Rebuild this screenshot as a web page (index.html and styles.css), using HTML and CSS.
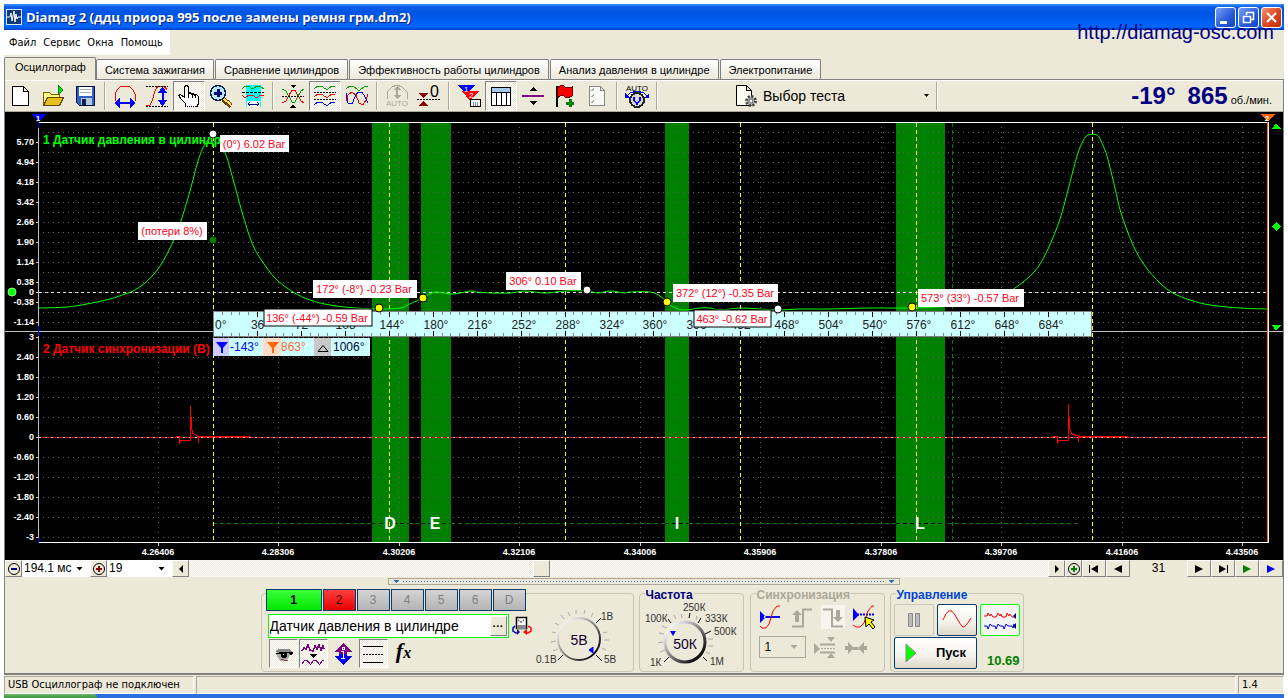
FILE: index.html
```html
<!DOCTYPE html>
<html lang="ru">
<head>
<meta charset="utf-8">
<title>Diamag 2</title>
<link rel="stylesheet" href="styles.css">
</head>
<body>
<div class="window">
  <header class="titlebar">
    <svg class="app-icon" width="16" height="16" viewBox="0 0 16 16"><rect width="16" height="16" fill="#d8e8ff"/><rect x="1" y="1" width="14" height="14" fill="#103878"/><path d="M1 8h3l1-4 1 8 2-10 1 11 1-8 1 5 1-2h3" fill="none" stroke="#fff"/></svg>
    <h1 class="title">Diamag 2 (ддц приора 995 после замены ремня грм.dm2)</h1>
    <div class="win-buttons">
      <button class="win-btn" aria-label="Свернуть"><svg width="19" height="19" viewBox="0 0 19 19"><path d="M4 13h7v3H4z" fill="#fff"/></svg></button>
      <button class="win-btn" aria-label="Развернуть"><svg width="19" height="19" viewBox="0 0 19 19"><path d="M7.500 7V4.500h7v7H12M7 4.500h8M4.500 8.500h7v6h-7zM4 8.500h8" fill="none" stroke="#fff" stroke-width="1.500"/></svg></button>
      <button class="win-btn close" aria-label="Закрыть"><svg width="19" height="19" viewBox="0 0 19 19"><path d="M5 5l9 9M14 5l-9 9" stroke="#fff" stroke-width="2.200"/></svg></button>
    </div>
  </header>
  <a class="site" href="#">http://diamag-osc.com</a>
  <nav class="menu">
    <button>Файл</button><button>Сервис</button><button>Окна</button><button>Помощь</button>
  </nav>
  <div class="tabs">
    <button class="tab active">Осциллограф</button>
    <button class="tab">Система зажигания</button>
    <button class="tab">Сравнение цилиндров</button>
    <button class="tab">Эффективность работы цилиндров</button>
    <button class="tab">Анализ давления в цилиндре</button>
    <button class="tab">Электропитание</button>
  </div>
  <main class="page">
    <div class="toolbar">
      <button class="tool" aria-label="Новый"><svg viewBox="0 0 24 24"><path d="M3.500 2.500h11l5 5v14h-16zM14.500 2.500v5h5" fill="#fff" stroke="#000"/></svg></button>
      <button class="tool" aria-label="Открыть"><svg viewBox="0 0 24 24"><path d="M2.500 21.500v-13h6l2 2h8v4" fill="#ffff80" stroke="#806000"/><path d="M2.500 21.500l4-8h16l-4 8z" fill="#e8c020" stroke="#604800"/><path d="M17 1l5 5-5 5z" fill="#00e020" stroke="#008000"/></svg></button>
      <button class="tool" aria-label="Сохранить"><svg viewBox="0 0 24 24"><path d="M3.500 2.500h18v19h-15l-3-3z" fill="#3060c0" stroke="#001040"/><path d="M6 3h13v9H6z" fill="#fff"/><path d="M8 14h11v7H8z" fill="#b8c8e0"/><path d="M9 15h4v6H9z" fill="#102050"/><path d="M7 5.500h11M7 8.500h11" stroke="#b0b0b0"/></svg></button>
      <span class="sep"></span>
      <button class="tool" aria-label="Период"><svg viewBox="0 0 24 24"><path d="M2 17V10l2-4 4-4h8l4 4 2 4v7" fill="none" stroke="#f00"/><path d="M1 19l6-5v4h10v-4l6 5-6 5v-4H7v4z" fill="#00f"/></svg></button>
      <button class="tool" aria-label="Амплитуда"><svg viewBox="0 0 24 24"><path d="M1 22l4-1 2-4 3-10 3-5h6l3 4" fill="none" stroke="#f00"/><path d="M1 2.500h22M1 22.500h22" stroke="#000" stroke-dasharray="2 1"/><path d="M17.500 3l5 6h-4v7h4l-5 6-5-6h4V9h-4z" fill="#00f"/></svg></button>
      <button class="tool pressed" aria-label="Рука"><svg viewBox="0 0 24 24"><path d="M8.500 22.500v-3l-4-4-3-4 2-1 4 3v-10l1-2 2 0 1 2v6l2-1 1 2 2-1 1 2 2-1 2 2v7l-2 4M11.500 9v5M15 10v4M18.500 11v3" fill="#fff" stroke="#000"/><path d="M8 22.500h12" stroke="#000" stroke-dasharray="1 1"/></svg></button>
      <button class="tool" aria-label="Увеличить"><svg viewBox="0 0 24 24"><path d="M14 15l8 7" stroke="#604000" stroke-width="5"/><path d="M14 14l8 7" stroke="#ffd860" stroke-width="2"/><circle cx="9" cy="9" r="7.500" fill="#b8e8ff" stroke="#102050" stroke-width="1.500"/><path d="M9 5v8M5 9h8" stroke="#000080" stroke-width="3"/></svg></button>
      <button class="tool" aria-label="Окно"><svg viewBox="0 0 24 24"><path d="M5 1h15v22H5z" fill="#0ff"/><path d="M1 5l3-3h3l5 3 4-3h3l4 3" fill="none" stroke="#00a000"/><path d="M1 11l3 3 4-3h3l5 3 3-3h4" fill="none" stroke="#f00"/><path d="M1 8.500h22" stroke="#000" stroke-dasharray="3 1"/><path d="M6 17h13v6H6z" fill="#fff"/><path d="M7 20h11M9 18l-2 2 2 2M16 18l2 2-2 2" fill="none" stroke="#0000a0"/></svg></button>
      <span class="sep"></span>
      <button class="tool" aria-label="Совмещение"><svg viewBox="0 0 24 24"><path d="M1 19l4-2 6-11h3l6 11 3 2" fill="none" stroke="#f00"/><path d="M1 5l4 2 6 11h3l6-11 3-2" fill="none" stroke="#00a000"/><path d="M1 12.500h22" stroke="#000" stroke-dasharray="2 1"/><path d="M9 1h6l-3 3zM9 24h6l-3-4z"/></svg></button>
      <button class="tool pressed" aria-label="Раздельно"><svg viewBox="0 0 24 24"><path d="M1 5l4-3h3l5 3h2l4-3h3" fill="none" stroke="#00a000"/><path d="M1 13l4-3h3l5 3h2l4-3h3" fill="none" stroke="#f00"/><path d="M1 21l4-3h3l5 3h2l4-3h3" fill="none" stroke="#00f"/><path d="M1 8.500h22M1 15.500h22" stroke="#000" stroke-dasharray="2 1"/></svg></button>
      <button class="tool" aria-label="Вместе"><svg viewBox="0 0 24 24"><path d="M1 5l4-3h3l5 4h2l5-4h3" fill="none" stroke="#00a000"/><path d="M1 17l2-6 4-3 4 3 3 8 4 2 3-5 2-6" fill="none" stroke="#f00"/><path d="M1 9l2 10 4 1 3-7 3-5h4l3 5 3 6" fill="none" stroke="#00f"/></svg></button>
      <span class="sep"></span>
      <button class="tool" aria-label="Авто" disabled><svg viewBox="0 0 24 24"><path d="M2 15V8l5-5 5-2 5 2 5 5v7" fill="none" stroke="#aca899"/><path d="M12 2l4 4h-3v5h3l-4 4-4-4h3V6H8z" fill="#aca899"/><text x="12" y="22" class="auto-label" fill="#aca899">AUTO</text></svg></button>
      <button class="tool" aria-label="Ноль"><svg viewBox="0 0 24 24"><path d="M1 9h10l-5 5zM1 22h10l-5-5z" fill="#900000"/><path d="M0 15.500h24" stroke="#000" stroke-dasharray="2 1"/><text x="13" y="13" class="zero-label">0</text></svg></button>
      <span class="sep"></span>
      <button class="tool" aria-label="Маркеры"><svg viewBox="0 0 24 24"><path d="M0 1h18l-9 9z" fill="#00f"/><path d="M5 7h17l-9 10z" fill="#f00"/><path d="M13 10v12" stroke="#f00"/><text x="7" y="8" class="flag-label">1</text><text x="12" y="14" class="flag-label">2</text><path d="M13.500 15.500h10v7h-10z" fill="#fff" stroke="#000"/><path d="M16.500 18v4M18.500 18v4M20.500 18v4" stroke="#888"/></svg></button>
      <button class="tool pressed" aria-label="Таблица"><svg viewBox="0 0 24 24"><path d="M2.500 3.500h19v18h-19z" fill="#fff" stroke="#000"/><path d="M3 4h18v4H3z" fill="#a8c8f0"/><path d="M3 8.500h18M7.500 8v13M12.500 8v13M17.500 8v13" stroke="#000"/></svg></button>
      <button class="tool" aria-label="Разделитель"><svg viewBox="0 0 24 24"><path d="M1 11h22v2H1z" fill="#800080"/><path d="M8 7h8l-4-4zM8 17h8l-4 4z"/></svg></button>
      <button class="tool" aria-label="Флаг"><svg viewBox="0 0 24 24"><path d="M3.500 2v21" stroke="#000" stroke-width="2"/><path d="M4 4l5-3 5 3 5-1v9l-5 2-5-3-5 3z" fill="#f00" stroke="#600"/><path d="M17 15v8M13 19h8" stroke="#008000" stroke-width="3"/></svg></button>
      <button class="tool" aria-label="Список" disabled><svg viewBox="0 0 24 24"><path d="M4.500 2.500h11l4 4v15h-15zM15.500 2.500v4h4" fill="#f8f8f4" stroke="#888"/><path d="M6 6l1 1 2-3M6 12l1 1 2-3M6 18l1 1 2-3" fill="none" stroke="#aaa"/></svg></button>
      <span class="sep"></span>
      <button class="tool" aria-label="Авто развёртка"><svg viewBox="0 0 24 24"><text x="12" y="7" class="auto-label">AUTO</text><circle cx="12" cy="16" r="7" fill="#d8d8d8" stroke="#222" stroke-width="2"/><path d="M1 13l4-4 7-2 7 2 4 4" fill="none" stroke="#00f"/><path d="M0 9v5h5zM24 9v5h-5z" fill="#00f"/><path d="M9 13v3l3 4 3-4v-3" fill="none" stroke="#00f" stroke-width="1.500"/></svg></button>
      <span class="sep"></span>
      <div class="test-pick">
        <svg width="24" height="24" viewBox="0 0 24 24"><path d="M2.500 1.500h10l5 5v15h-15zM12.500 1.500v5h5" fill="#fffff4" stroke="#000"/><circle cx="17" cy="17" r="4.500" fill="#bbb" stroke="#444" stroke-width="3" stroke-dasharray="2 1.500"/><circle cx="17" cy="17" r="2" fill="#fff" stroke="#666"/></svg>
        <label class="combo flat"><select aria-label="Тест"><option>Выбор теста</option></select></label>
      </div>
      <span class="sep"></span>
      <div class="readout"><b>-19°</b><b>865</b><span>об./мин.</span></div>
    </div>

    <svg class="scope" id="scope" viewBox="5 113 1278 448" role="img" aria-label="Осциллограмма">
      <defs>
        <pattern id="dots10" x="38" y="123" width="5" height="10" patternUnits="userSpaceOnUse"><rect width="1" height="1" fill="#606060"/></pattern>
        <pattern id="dots20" x="38" y="338" width="5" height="20" patternUnits="userSpaceOnUse"><rect width="1" height="1" fill="#606060"/></pattern>
      </defs>
      <rect x="5" y="113" width="1278" height="448"/>
      <g class="crisp">
        <g fill="#008000"><rect x="372" y="124" width="37" height="419"/><rect x="421" y="124" width="30" height="419"/><rect x="665" y="124" width="24" height="419"/><rect x="896" y="124" width="49" height="419"/></g>
        <rect x="39" y="133" width="1228" height="199" fill="url(#dots10)"/>
        <rect x="39" y="338" width="1228" height="205" fill="url(#dots20)"/>
        <g id="grid"></g>
        <path d="M952.500 124V543" stroke="#008000" stroke-dasharray="4 3"/>
        <path d="M213 524.500H1080" stroke="#008000" stroke-dasharray="4 3"/>
        <path d="M372 524.500h37M421 524.500h30M665 524.500h24M896 524.500h49" stroke="#000" stroke-dasharray="4 3"/>
        <path d="M39 293.500H1267" stroke="#ddd" stroke-dasharray="3 3"/>
        <path d="M5 332.500H1283" stroke="#c0c0c0"/>
        <path d="M38.500 123V543" stroke="#c0c0c0"/>
      </g>
      <path id="pressure" fill="none" stroke="#00ff00"/>
      <g class="crisp">
        <path d="M39 438.500H1267" stroke="#f00"/>
        <path d="M39 438.500H1267" stroke="#ddd" stroke-dasharray="2 4"/>
        <path d="M175.500 437.500h4v7l1-3h10v-34l1 20 1 7 3 1 3 3v5M198 437.500h52" fill="none" stroke="#f00"/>
        <path d="M1052.500 437.500h5v7l1-3h10v-36l1 24 2 5 4 2h3v6M1078 437.500h50" fill="none" stroke="#f00"/>
        <path d="M213.500 124V543M389.500 124V543M565.500 124V543M740.500 124V543M916.500 124V543M1092.500 124V543" stroke="#ff0" stroke-dasharray="4 3"/>
        <path d="M38 123.500H1269M38 543.500H1269" stroke="#fff"/>
        <path d="M1268.500 123V543" stroke="#fff"/><path d="M1267.500 123V543" stroke="#ff6600"/>
        <path d="M38.500 123v6M38.500 327v10M38.500 539v5" stroke="#00f"/>
        <path d="M31 115h15l-7 8z" fill="#00f"/><path d="M1260 115h15l-7 8z" fill="#ff6600"/>
        <path d="M1272 130h9l-5-6zM1272 326h9l-5 6zM1272 227.500l4.500-4.500 4.500 4.500-4.500 4.500z" fill="#0f0"/>
      </g>
      <text x="38" y="122" class="mark">1</text><text x="1267" y="122" class="mark">2</text>
      <text x="43" y="145" class="channel" fill="#00ff00">1 Датчик давления в цилиндр</text>
      <text x="43" y="354" class="channel" fill="#ff0000">2 Датчик синхронизации (В)</text>
      <g class="phase"><text x="390" y="530">D</text><text x="435" y="530">E</text><text x="677" y="530">I</text><text x="920" y="530">L</text></g>
      <g id="ruler"><rect x="213.500" y="312.500" width="878" height="25" fill="#ccffff" stroke="#808080"/></g>
      <g id="cursors">
        <rect x="213" y="339" width="157" height="18" fill="#ccffff"/>
        <rect x="213" y="339" width="16" height="18" fill="#ccccff"/><rect x="263" y="339" width="18" height="18" fill="#ffdcc8"/><rect x="314" y="339" width="17" height="18" fill="#c8c8c8"/>
        <path d="M216 343h12l-5 6v5h-2v-5z" fill="#00f"/><path d="M267 343h12l-5 6v5h-2v-5z" fill="#ff6600"/><path d="M318 352.500h10l-5-6z" fill="none" stroke="#000"/>
        <text x="230" y="352" fill="#0000ff">-143°</text><text x="281" y="352" fill="#ff6633">863°</text><text x="333" y="352" fill="#000040">1006°</text>
      </g>
      <g id="notes"></g>
      <g stroke="#000"><circle cx="213" cy="135" r="4" fill="#fff"/><circle cx="213" cy="241" r="4" fill="#008000"/><circle cx="379" cy="309" r="4" fill="#ff0"/><circle cx="423" cy="299" r="4" fill="#ff0"/><circle cx="587" cy="291" r="4" fill="#fff"/><circle cx="667" cy="303" r="4" fill="#ff0"/><circle cx="778" cy="310" r="4" fill="#fff"/><circle cx="912" cy="308" r="4" fill="#ff0"/><circle cx="12" cy="293" r="4" fill="#0f0" stroke="#8f8"/></g>
    </svg>

    <div class="navrow">
      <button class="nav small" aria-label="Сжать"><svg viewBox="0 0 16 16"><circle cx="8" cy="8" r="5.500" fill="none" stroke="#000"/><path d="M5 8h6" stroke="#000080" stroke-width="2"/></svg></button>
      <label class="combo time"><select aria-label="Развёртка"><option>194.1 мс</option></select></label>
      <button class="nav small" aria-label="Растянуть"><svg viewBox="0 0 16 16"><circle cx="8" cy="8" r="5.500" fill="none" stroke="#000"/><path d="M5 8h6M8 5v6" stroke="#900000" stroke-width="2"/></svg></button>
      <label class="combo frame"><select aria-label="Кадр"><option>19</option></select></label>
      <button class="nav small" aria-label="Влево"><svg viewBox="0 0 16 16"><path d="M10 4v8L6 8z"/></svg></button>
      <div class="track"><span class="thumb"></span></div>
      <button class="nav small" aria-label="Вправо"><svg viewBox="0 0 16 16"><path d="M6 4v8l4-4z"/></svg></button>
      <button class="nav small" aria-label="Масштаб"><svg viewBox="0 0 16 16"><circle cx="8" cy="8" r="5.500" fill="none" stroke="#000"/><path d="M5 8h6M8 5v6" stroke="#008000" stroke-width="2"/></svg></button>
      <button class="nav" aria-label="В начало"><svg viewBox="0 0 16 16"><path d="M3 4h1v8H3zM12 4v8L5 8z"/></svg></button>
      <button class="nav" aria-label="Назад"><svg viewBox="0 0 16 16"><path d="M12 4v8L4 8z"/></svg></button>
      <output class="count">31</output>
      <button class="nav" aria-label="Вперёд"><svg viewBox="0 0 16 16"><path d="M4 4v8l8-4z"/></svg></button>
      <button class="nav" aria-label="В конец"><svg viewBox="0 0 16 16"><path d="M4 4v8l7-4zM12 4h1v8h-1z"/></svg></button>
      <button class="nav" aria-label="Воспроизвести"><svg viewBox="0 0 16 16"><path d="M4 4v8l8-4z" fill="#008000"/></svg></button>
      <button class="nav" aria-label="Продолжить"><svg viewBox="0 0 16 16"><path d="M4 4v8l8-4z" fill="#00f"/></svg></button>
    </div>

    <div class="splitter"><i></i><span></span><i></i></div>

    <div class="panels">
      <section class="group channel-group">
        <div class="channel-controls">
          <div class="chans"><button class="chan one">1</button><button class="chan two">2</button><button class="chan">3</button><button class="chan">4</button><button class="chan">5</button><button class="chan">6</button><button class="chan">D</button></div>
          <div class="sensor-row">
            <div class="sensor"><input type="text" aria-label="Датчик" value="Датчик давления в цилиндре"><button aria-label="Выбрать">···</button></div>
            <button class="plain" aria-label="Инвертировать"><svg width="20" height="20" viewBox="0 0 20 20"><path d="M4.500 1.500h10v11h-10z" fill="#fff" stroke="#000" stroke-width="1.500"/><path d="M5 9h9v4H5z" fill="#888"/><path d="M6 4l2 1 1 2 1-2 2-1" fill="none" stroke="#000" stroke-dasharray="1 1"/><path d="M3 10l-2 2v3l3 2h2" fill="none" stroke="#0000a0" stroke-width="1.500"/><path d="M5 13v6l3-3z" fill="#0000a0"/><path d="M16 10l3 2v3l-3 2h-2" fill="none" stroke="#f00" stroke-width="1.500"/><path d="M15 13v6l-4-3z" fill="#f00"/></svg></button>
          </div>
          <div class="modes">
            <button class="mode pressed" aria-label="Показать"><svg viewBox="0 0 24 24"><path d="M4 9l4-2h10l3 3-2 1H6z" fill="#888"/><path d="M5 12l4-2h8l3 1-3 6-4 2H9z" fill="#aaa"/><path d="M4 12l5-2h8l5 0v2l-3 1-2-2-9 1z" fill="#000"/><circle cx="13" cy="13" r="3" fill="#000"/><path d="M12 12h1v1h-1z" fill="#fff"/><path d="M10 17l3 1h4" stroke="#a04040" fill="none"/></svg></button>
            <button class="mode pressed" aria-label="Фильтр"><svg viewBox="0 0 24 24"><path d="M1 9l2-3 2 1 2-4 2 5 3 1 2-5 2 3 2-4 2 5 2-4 1 3" fill="none" stroke="#800080" stroke-width="1.500"/><path d="M8 12h8l-4 4z"/><path d="M1 22l3-4h2l3 4h1l3-4h2l3 4h1l3-4h1" fill="none" stroke="#800080"/></svg></button>
            <button class="mode" aria-label="Сдвиг"><svg viewBox="0 0 24 24"><path d="M12 1l9 9h-5v2H8v-2H3z" fill="#800080"/><path d="M12 23l9-9h-5v-2H8v2H3z" fill="#00f"/><path d="M10 9h2v7h2M10 16h4M11 5h2v2h-2z" stroke="#fff" fill="none"/></svg></button>
            <button class="mode pressed" aria-label="Линии"><svg viewBox="0 0 24 24"><path d="M2 4.500h20M2 20.500h20" stroke="#000"/><path d="M2 12.500h20" stroke="#000" stroke-dasharray="2 1"/></svg></button>
            <button class="mode fx" aria-label="Функция"><i>f</i><i class="sub">x</i></button>
          </div>
        </div>
        <svg class="dial" width="98" height="74" viewBox="535 598 98 74">
          <defs><linearGradient id="ring" x1="0" y1="0" x2="1" y2="1"><stop offset=".1" stop-color="#fff"/><stop offset=".9" stop-color="#000"/></linearGradient></defs>
          <path d="M564 656l-5 5M597 656l6 6M597 624l5-5" stroke="#000"/>
          <path d="M559 650l-5 2M557 642l-5 1M557 634l-4-1M560 626l-4-2M565 620l-3-4M571 617l-2-4M577 615v-4M585 615l1-4M592 618l2-4M604 634l4-1M605 641h5M603 649l4 2" stroke="#aaa"/>
          <circle cx="580" cy="640" r="21" fill="#ece9d8" stroke="url(#ring)" stroke-width="2"/>
          <path d="M590 651l4-3v6z" fill="#00f" stroke="#00f"/>
          <text x="580" y="646" class="dial-value">5В</text><text x="602" y="621">1В</text><text x="537" y="664">0.1В</text><text x="605" y="664">5В</text>
        </svg>
      </section>
      <section class="group freq-group">
        <h2>Частота</h2>
        <svg class="dial" width="98" height="74" viewBox="641 598 98 74">
          <path d="M688 619l1-5M697 624l3-5M704 635l6-3M702 658l4 4M668 658l-5 5M670 624l-3-4" stroke="#000"/>
          <path d="M664 651l-5 2M662 643l-5 1M663 635l-5-1M666 629l-5-2M675 620l-2-4M681 619l-1-4M695 621l1-4M707 640h5M707 647h5M705 653l4 2" stroke="#aaa"/>
          <circle cx="684" cy="643" r="20" fill="#ece9d8" stroke="url(#ring)" stroke-width="3"/>
          <path d="M669 632h6l-3 5z" fill="#00f"/>
          <text x="684" y="650" class="dial-value">50К</text><text x="682" y="612">250К</text><text x="644" y="623">100К</text><text x="704" y="623">333К</text><text x="713" y="636">500К</text><text x="649" y="667">1К</text><text x="709" y="666">1М</text>
        </svg>
      </section>
      <section class="group sync-group">
        <h2>Синхронизация</h2>
        <div class="sync-row">
          <button class="plain" aria-label="Уровень"><svg viewBox="0 0 24 24"><path d="M1 6v12l6-6zM5 11h16v2H5z" fill="#00f"/><path d="M1 21l2 2h4l3-4 4-13 4-5h3" fill="none" stroke="#f00"/></svg></button>
          <button class="plain" aria-label="Фронт" disabled><svg viewBox="0 0 24 24"><path d="M2 21.500h11v-17h9" fill="none" stroke="#aca899" stroke-width="2"/><path d="M7 5l5 5H9v7H5v-7H2z" fill="#aca899"/></svg></button>
          <button class="plain on" aria-label="Спад" disabled><svg viewBox="0 0 24 24"><path d="M2 4.500h9v17h11" fill="none" stroke="#aca899" stroke-width="2"/><path d="M17 17l5-5h-3V5h-4v7h-3z" fill="#aca899"/></svg></button>
          <button class="plain" aria-label="Курсор"><svg viewBox="0 0 24 24"><path d="M1 3v13l6-6z" fill="#00f"/><path d="M5 9.500h17" stroke="#00f" stroke-dasharray="2 1" stroke-width="2"/><path d="M1 20l3 2h4l4-4 4-12 4-5h2" fill="none" stroke="#f00"/><path d="M13 12l9 3-3 2 4 5-2 2-4-5-3 3z" fill="#ff0" stroke="#000"/></svg></button>
        </div>
        <div class="sync-row second">
          <label class="combo num"><select aria-label="Канал синхронизации" disabled><option>1</option></select></label>
          <button class="plain" aria-label="Окно уровня" disabled><svg viewBox="0 0 24 24"><path d="M1 7v11l6-5zM14 1h8l-4 5zM14 22h8l-4-5z" fill="#aca899"/><path d="M7 8.500h15M7 16.500h15" stroke="#aca899" stroke-width="2"/><path d="M8 12.500h14" stroke="#aca899" stroke-dasharray="2 1"/></svg></button>
          <button class="plain" aria-label="Сжать" disabled><svg viewBox="0 0 24 24"><path d="M1 10h3V6l6 6-6 6v-4H1zM23 10h-3V6l-6 6 6 6v-4h3zM9 11h6v3H9z" fill="#aca899"/></svg></button>
        </div>
      </section>
      <section class="group run-group">
        <h2>Управление</h2>
        <div class="run-grid">
          <button class="big off" aria-label="Пауза" disabled><svg width="30" height="26" viewBox="0 0 30 26"><path d="M9.500 6.500h4v13h-4zM16.500 6.500h4v13h-4z" fill="#bbb" stroke="#888"/></svg></button>
          <button class="big" aria-label="Сигнал"><svg width="30" height="26" viewBox="0 0 30 26"><path d="M1 13Q7-3 13 8T21 20T29 11" fill="none" stroke="#f00"/></svg></button>
          <button class="big live" aria-label="Запись"><svg width="34" height="20" viewBox="0 0 34 20"><path d="M1 6h3l1-3 2 3 1-2 2 3h3l2-4 2 3 1-2 1 3h4l1-4 2 3 1-2 2 3h3" fill="none" stroke="#f00"/><path d="M1 16h3l1 3 2-5 2 2h3l1 3 2-5 2 2h3l1 3 2-5 2 2h4l1 2 1-4 1 2" fill="none" stroke="#00f"/><path d="M33 3v6l-3-3zM33 13v6l-3-3z" fill="#000080"/></svg></button>
          <button class="big start"><svg width="14" height="20" viewBox="0 0 14 20"><path d="M2 1v18l10-9z" fill="#0f0" stroke="#888"/></svg><span>Пуск</span></button>
          <output class="rate">10.69</output>
        </div>
      </section>
    </div>
  </main>
  <footer class="status"><span class="cell msg">USB Осциллограф не подключен</span><span class="cell fill"></span><span class="cell ver">1.4</span></footer>
</div>
<div class="taskbar"><span></span></div>
<script src="scope.js"></script>
</body>
</html>
```

FILE: styles.css
```css
* { box-sizing: border-box; }
body { margin: 0; padding: 4px 4px 0; background: #fff; font: 11px/14px "Liberation Sans", Arial, sans-serif; color: #000; }
button, select, input { font: inherit; color: inherit; margin: 0; padding: 0; border: 0; background: none; }
svg { display: block; }
h1, h2 { margin: 0; }

.window { position: relative; background: #ece9d8; }
.titlebar { display: flex; align-items: center; height: 26px; padding: 0 0 0 2px; gap: 4px; background: linear-gradient(#3a93ff 0, #0a5be8 12%, #0054e3 40%, #0062fa 75%, #0066ff 88%, #003fc0 100%); }
.title { flex: 1; font: bold 13px/18px "Open Sans", "Noto Sans", sans-serif; color: #fff; text-shadow: 1px 1px 0 #0a1f7a; white-space: nowrap; }
.win-buttons { display: flex; gap: 2px; padding-right: 2px; }
.win-btn { width: 21px; height: 21px; border: 1px solid #fff; border-radius: 3px; background: linear-gradient(135deg, #7aa0f8, #2458d8 60%, #1848c0); }
.win-btn.close { background: linear-gradient(135deg, #f09878, #e04820 50%, #c03008); }
.site { position: absolute; right: 10px; top: 16px; font-size: 20px; line-height: 24px; color: #000080; text-decoration: none; }
.menu { display: flex; gap: 7px; width: 166px; height: 25px; padding: 0 5px; background: #fff; font-family: "DejaVu Sans Condensed", "DejaVu Sans", sans-serif; font-size: 11px; }

.tabs { display: flex; gap: 1px; align-items: flex-end; height: 24px; }
.tab { height: 20px; padding: 0 8px; border: 1px solid #808080; border-bottom: 0; border-radius: 2px 2px 0 0; background: linear-gradient(#fff, #f4f3ee 50%, #ece9d8); white-space: nowrap; }
.tab.active { position: relative; height: 23px; margin: 0 -1px -1px 0; padding: 0 9px 4px 10px; background: #ece9d8; }

.page { border: 1px solid #808080; border-width: 1px 1px 2px; box-shadow: inset 0 1px 0 #fff; }
.toolbar { display: flex; align-items: center; height: 32px; padding: 1px 0; border-bottom: 1px solid #aca899; }
.tool { flex: none; width: 32px; height: 30px; display: grid; place-items: center; }
.tool svg { width: 24px; height: 24px; shape-rendering: crispEdges; }
.pressed { border: 1px solid; border-color: #808080 #fff #fff #808080; background: conic-gradient(#fff 25%, #ece9d8 0 50%, #fff 0 75%, #ece9d8 0) 0 0 / 2px 2px; }
.sep { flex: none; width: 8px; height: 28px; background: linear-gradient(90deg, transparent 3px, #aca899 3px 4px, #fff 4px 5px, transparent 5px); }
.auto-label { font-size: 8px; text-anchor: middle; }
.zero-label { font-size: 16px; }
.flag-label { font-size: 8px; fill: #fff; }
.test-pick { display: flex; gap: 5px; align-items: center; margin-left: 73px; width: 199px; }
.combo { display: grid; align-items: center; }
.combo select { grid-area: 1 / 1; width: 100%; appearance: none; }
.combo::after { content: ""; grid-area: 1 / 1; justify-self: end; width: 7px; height: 4px; margin-right: 7px; background: #000; clip-path: polygon(0 0, 100% 0, 50% 100%); pointer-events: none; }
.combo.flat { flex: 1; font-size: 14px; line-height: 18px; }
.combo.flat::after { width: 5px; height: 3px; margin-right: 4px; }
.readout { display: flex; align-items: baseline; margin-left: auto; padding-right: 11px; color: #000080; }
.readout b { font-size: 24px; line-height: 30px; margin-right: 12px; }
.readout b + b { margin-right: 3px; }
.readout span { color: #000; font-size: 11px; }

.scope { width: 100%; height: auto; }
.crisp { shape-rendering: crispEdges; }
.scope text { font-family: "Liberation Sans", Arial, sans-serif; font-size: 12px; }
.scope .axis text { font-size: 9px; font-weight: bold; fill: #fff; }
.scope .axis.y text { text-anchor: end; }
.scope .axis.x text { text-anchor: middle; }
.scope .mark { font-size: 8px; font-weight: bold; fill: #fff; text-anchor: middle; }
.scope .channel { font-size: 12px; font-weight: bold; }
.scope .phase text { font-size: 16px; font-weight: bold; fill: #fff; text-anchor: middle; }
.scope .deg { text-anchor: middle; fill: #222; }
.scope #notes text { font-size: 11px; fill: #ff0020; text-anchor: middle; }

.navrow { display: flex; height: 17px; background: #ece9d8; }
.nav { flex: none; width: 24px; height: 17px; display: grid; place-items: center; background: #ece9d8; border: 1px solid; border-color: #fff #808080 #808080 #fff; }
.nav.small { width: 17px; }
.nav svg { width: 16px; height: 16px; margin: -1px; }
.navrow .combo { background: #fff; padding-left: 2px; font-size: 12px; line-height: 15px; }
.time { width: 68px; }
.frame { width: 65px; }
.track { flex: 1; display: flex; background: conic-gradient(#fff 25%, #ece9d8 0 50%, #fff 0 75%, #ece9d8 0) 0 0 / 2px 2px; }
.thumb { width: 17px; margin-left: 40%; border: 1px solid; border-color: #fff #808080 #808080 #fff; background: #ece9d8; }
.count { width: 57px; font-size: 12px; line-height: 17px; text-align: center; }

.splitter { display: flex; align-items: center; justify-content: space-between; width: 40%; height: 7px; margin: 1px auto 0; padding: 0 4px; border: 1px solid #aca899; gap: 4px; }
.splitter i { width: 6px; height: 3px; background: #2060c0; clip-path: polygon(0 0, 100% 0, 50% 100%); }
.splitter span { flex: 1; height: 1px; background: repeating-linear-gradient(90deg, #4070c0 0 1px, transparent 1px 3px); }

.panels { display: flex; justify-content: center; gap: 5px; padding: 8px 4px 1px 0; }
.group { position: relative; height: 79px; border: 1px solid #c8c5b2; border-radius: 4px; }
.group h2 { position: absolute; left: 5px; top: -6px; padding: 0 1px; font: bold 12px/14px "Liberation Sans", Arial, sans-serif; color: #000080; background: #ece9d8; }
.channel-group { display: flex; width: 373px; padding-left: 4px; gap: 2px; }
.channel-controls { width: 266px; margin-top: -5px; }
.chans { display: flex; gap: 1px; }
.chan { width: 33px; height: 22px; border: 1px solid #003c74; background: linear-gradient(#d4d4d4, #b4b4b4); color: #808080; font-size: 12px; }
.chan.one { width: 56px; background: linear-gradient(#3cff3c, #00e800); color: #000; font-weight: bold; }
.chan.two { background: linear-gradient(#ff4040, #e80000); color: #400; }
.sensor-row { display: flex; gap: 3px; align-items: center; margin: 3px 0 0 2px; }
.sensor { display: flex; width: 241px; height: 24px; border: 1px solid #00ff00; background: #fff; padding: 1px; }
.sensor input { flex: 1; min-width: 0; font-size: 14px; outline: 0; }
.sensor button { width: 17px; border: 1px solid; border-color: #fff #808080 #808080 #fff; background: #ece9d8; font-weight: bold; line-height: 12px; }
.plain { display: grid; place-items: center; }
.modes { display: flex; gap: 1px; margin: 1px 0 0 3px; }
.mode { width: 29px; height: 29px; display: grid; place-items: center; }
.mode svg { width: 24px; height: 24px; shape-rendering: crispEdges; }
.mode.fx { display: flex; align-items: baseline; justify-content: center; width: 30px; font: italic bold 22px/24px "Liberation Serif", serif; }
.fx .sub { font-size: 16px; }
.dial { margin-top: 3px; }
.dial text { font: 10px "Liberation Sans", Arial, sans-serif; fill: #333; }
.dial .dial-value { font-size: 14px; fill: #103; text-anchor: middle; }
.freq-group { width: 105px; padding-left: 2px; }
.sync-group { width: 135px; padding: 11px 8px 0; margin-left: 1px; }
.sync-group h2 { color: #aca899; }
.sync-row { display: flex; justify-content: space-between; }
.sync-row svg { width: 24px; height: 24px; }
.sync-row .on { background: #f6f4ec; }
.sync-row.second { justify-content: flex-start; gap: 7px; margin-top: 7px; }
.num { width: 47px; height: 22px; border: 1px solid #aca899; padding-left: 5px; font-size: 12px; }
.num::after { background: #aca899; }
.num select { color: #000; opacity: 1; }
.run-group { width: 134px; padding: 10px 2px 0 3px; }
.run-group h2 { color: #0046d5; }
.run-grid { display: grid; grid-template-columns: 40px 40px 40px; gap: 1px 3px; }
.big { height: 32px; display: flex; align-items: center; justify-content: center; border: 1px solid #003c74; border-radius: 2px; background: linear-gradient(#fff, #f4f2ea 60%, #dcd8c8); }
.big.off { border-color: #c8c5b2; background: #ece9d8; }
.big.live { border: 1px solid #00ff00; background: #f4f4f4; }
.big.start { grid-column: span 2; gap: 18px; font-size: 13px; font-weight: bold; }
.rate { align-self: end; font-size: 13px; line-height: 16px; font-weight: bold; color: #008000; text-align: right; }

.status { display: flex; gap: 2px; margin-top: 1px; font: 11px/16px "DejaVu Sans Condensed", "DejaVu Sans", sans-serif; }
.cell { border: 1px solid; border-color: #aca899 #fff #fff #aca899; height: 18px; padding: 0 3px; }
.msg { width: 190px; white-space: nowrap; }
.fill { flex: 1; }
.ver { width: 46px; }
.taskbar { height: 4px; background: #2a6ee0; }
.taskbar span { display: block; width: 93px; height: 4px; background: linear-gradient(#6cb86c, #3c923c); border-radius: 0 4px 0 0; }
```

FILE: scope.js
```javascript
const NS = "http://www.w3.org/2000/svg";
const scope = document.getElementById("scope");

function add(parent, name, attrs, text) {
  const el = document.createElementNS(NS, name);
  for (const key in attrs) el.setAttribute(key, attrs[key]);
  if (text !== undefined) el.textContent = text;
  parent.appendChild(el);
  return el;
}

// Smooth curve through sample points (Catmull-Rom to Bezier).
function smooth(points) {
  let d = `M${points[0]}`;
  for (let i = 0; i < points.length - 1; i++) {
    const p0 = points[i - 1] || points[i];
    const p1 = points[i];
    const p2 = points[i + 1];
    const p3 = points[i + 2] || p2;
    const c1 = [p1[0] + (p2[0] - p0[0]) / 6, p1[1] + (p2[1] - p0[1]) / 6];
    const c2 = [p2[0] - (p3[0] - p1[0]) / 6, p2[1] - (p3[1] - p1[1]) / 6];
    d += `C${c1} ${c2} ${p2}`;
  }
  return d;
}

const samples = [
  [39, 309], [67, 308], [87, 305], [110, 300], [125, 295], [133, 292], [145, 284], [158, 270],
  [168, 253], [175, 238], [181, 222], [190, 192], [198, 162], [205, 145], [213, 137], [220, 143],
  [226, 156], [233, 180], [242, 213], [252, 244], [262, 262], [276, 280], [293, 293], [310, 301],
  [330, 306], [355, 309], [378, 310], [400, 309], [412, 304], [423, 299], [430, 295], [437, 293],
  [453, 295], [470, 292], [476, 293], [492, 294], [510, 294], [525, 292], [545, 294], [565, 292],
  [587, 292], [598, 294], [610, 292], [625, 294], [630, 293], [650, 293], [660, 297], [667, 303],
  [675, 309], [685, 311], [700, 309], [710, 309], [720, 311], [740, 309], [760, 310], [778, 311],
  [800, 310], [830, 310], [870, 309], [912, 309], [950, 307], [985, 302], [1000, 298], [1015, 289],
  [1035, 272], [1048, 250], [1060, 220], [1068, 191], [1077, 157], [1083, 142], [1088, 136],
  [1097, 136], [1101, 142], [1107, 157], [1115, 189], [1121, 214], [1133, 246], [1145, 267],
  [1160, 284], [1173, 294], [1190, 301], [1210, 306], [1240, 309], [1267, 310]
];
document.getElementById("pressure").setAttribute("d", smooth(samples));

const grid = document.getElementById("grid");
const yAxis = add(scope, "g", { class: "axis y" });
const xAxis = add(scope, "g", { class: "axis x" });

["4.26406", "4.28306", "4.30206", "4.32106", "4.34006", "4.35906", "4.37806", "4.39706", "4.41606", "4.43506"]
  .forEach((label, i) => {
    const x = Math.round(158 + i * 120.45);
    add(grid, "path", { d: `M${x}.5 128V543`, stroke: "#606060", "stroke-dasharray": "1 4" });
    add(grid, "path", { d: `M${x}.5 544v3`, stroke: "#ccc" });
    add(xAxis, "text", { x: x, y: 556 }, label);
  });

[["5.70", 143], ["4.94", 163], ["4.18", 183], ["3.42", 203], ["2.66", 223], ["1.90", 243], ["1.14", 263],
 ["0.38", 283], ["0", 293], ["-0.38", 303], ["-1.14", 323], ["3", 338], ["2.40", 358], ["1.80", 378],
 ["1.20", 398], ["0.60", 418], ["0", 438], ["-0.60", 458], ["-1.20", 478], ["-1.80", 498], ["-2.40", 518],
 ["-3", 538]].forEach(([label, y]) => {
  add(grid, "path", { d: `M36 ${y}.5h2`, stroke: "#ccc" });
  add(yAxis, "text", { x: 34, y: y + 3 }, label);
});

const ruler = document.getElementById("ruler");
for (let k = 1; k < 100; k++) {
  const x = Math.round(213 + k * 8.79);
  const major = k % 5 === 0;
  const len = major ? 5 : 3;
  add(ruler, "path", { d: `M${x}.5 313v${len}M${x}.5 337v-${len}`, stroke: major ? "#000" : "#888" });
}
add(ruler, "text", { x: 215, y: 330, fill: "#222" }, "0°");
for (let deg = 36; deg < 720; deg += 36) {
  add(ruler, "text", { x: Math.round(216 + deg * 1.2208), y: 330, class: "deg" }, `${deg}°`);
}

const notes = document.getElementById("notes");
[["(0°) 6.02 Bar", 220, 136, 69, 17, false], ["(потери 8%)", 138, 223, 69, 18, false],
 ["172° (-8°) -0.23 Bar", 313, 281, 104, 18, false], ["136° (-44°) -0.59 Bar", 264, 310, 108, 17, true],
 ["306° 0.10 Bar", 506, 273, 75, 18, false], ["372° (12°) -0.35 Bar", 673, 285, 105, 18, false],
 ["463° -0.62 Bar", 694, 311, 77, 17, true], ["573° (33°) -0.57 Bar", 918, 290, 106, 18, false]
].forEach(([label, x, y, w, h, outlined]) => {
  const box = { x: x, y: y, width: w, height: h, fill: "#fff" };
  if (outlined) box.stroke = "#000";
  add(notes, "rect", box);
  add(notes, "text", { x: x + Math.round(w / 2) - 1, y: y + 13 }, label);
});
```
